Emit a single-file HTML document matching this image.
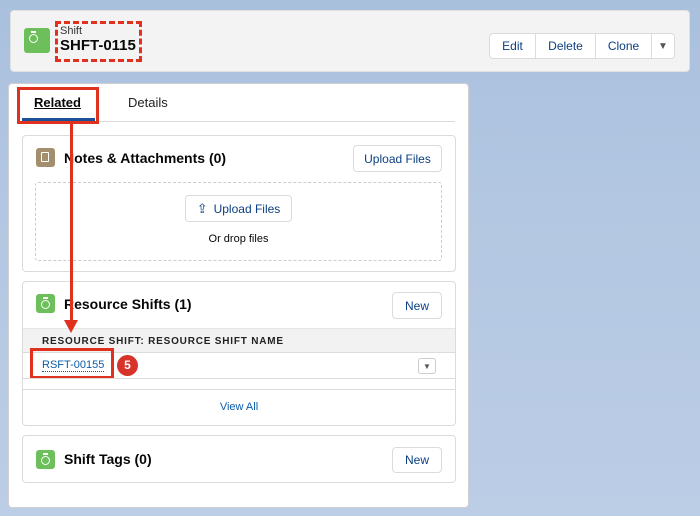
<!DOCTYPE html>
<html><head><style>
*{box-sizing:border-box;margin:0;padding:0}
body{width:700px;height:516px;overflow:hidden;background:linear-gradient(180deg,#a9c0dd 0%,#b3c7e2 40%,#bccde6 100%);font-family:"Liberation Sans",sans-serif;position:relative;color:#080707}
.a{position:absolute}
.card{position:absolute;background:#fff;border:1px solid #dddbda;border-radius:4px}
.btn{position:absolute;background:#fff;border:1px solid #dddbda;border-radius:4px;color:#0b3f82;font-size:12px;display:flex;align-items:center;justify-content:center}
.ic{position:absolute;width:19px;height:19px;background:#6cbf5b;border-radius:3px}
.ic::after{content:"";position:absolute;left:5px;top:6px;width:7px;height:7px;border:1.5px solid #fff;border-radius:50%}
.ic::before{content:"";position:absolute;left:7px;top:3px;width:5px;height:2px;background:#fff}
.t{position:absolute;font-size:14px;font-weight:bold;color:#080707}
</style></head><body>
<div class="card" style="left:10px;top:10px;width:680px;height:62px;background:#f3f3f3;border-color:#e0e0e0"></div>
<div class="ic" style="left:24px;top:28px;width:26px;height:25px"></div>
<div class="a" style="left:60px;top:25px;font-size:11px;color:#333">Shift</div>
<div class="a" style="left:60px;top:37px;font-size:15px;font-weight:bold">SHFT-0115</div>
<div class="a" style="left:55px;top:21px;width:87px;height:41px;border:3px dashed #e0301e"></div>
<div class="a" style="left:489px;top:33px;width:186px;height:26px;background:#fff;border:1px solid #dddbda;border-radius:4px;display:flex;font-size:12px;color:#0b3f82">
<div style="width:46px;border-right:1px solid #dddbda;display:flex;align-items:center;justify-content:center">Edit</div>
<div style="width:60px;border-right:1px solid #dddbda;display:flex;align-items:center;justify-content:center">Delete</div>
<div style="width:56px;border-right:1px solid #dddbda;display:flex;align-items:center;justify-content:center">Clone</div>
<div style="flex:1;display:flex;align-items:center;justify-content:center;color:#555;font-size:10px">▼</div>
</div>
<div class="card" style="left:8px;top:83px;width:461px;height:425px;border-color:#d0d0d0"></div>
<div class="a" style="left:34px;top:95px;font-size:13px;font-weight:bold;text-decoration:underline">Related</div>
<div class="a" style="left:128px;top:95px;font-size:13px;color:#222">Details</div>
<div class="a" style="left:22px;top:121px;width:433px;height:1px;background:#dddbda"></div>
<div class="a" style="left:22px;top:118px;width:73px;height:3px;background:#1b5297"></div>
<div class="a" style="left:17px;top:87px;width:82px;height:37px;border:3px solid #e0301e"></div>

<div class="card" style="left:22px;top:135px;width:434px;height:137px"></div>
<div class="a" style="left:36px;top:148px;width:19px;height:19px;background:#a38f6d;border-radius:3px"><div style="position:absolute;left:5px;top:4px;width:8px;height:10px;border:1.5px solid #fff;border-radius:1px"></div></div>
<div class="t" style="left:64px;top:150px">Notes &amp; Attachments (0)</div>
<div class="btn" style="left:353px;top:145px;width:89px;height:27px">Upload Files</div>
<div class="a" style="left:35px;top:182px;width:407px;height:79px;border:1px dashed #ccc;border-radius:3px"></div>
<div class="btn" style="left:185px;top:195px;width:107px;height:27px"><span style="font-size:13px;margin-right:6px">⇪</span>Upload Files</div>
<div class="a" style="left:0;width:477px;top:233px;text-align:center;font-size:11px">Or drop files</div>

<div class="card" style="left:22px;top:281px;width:434px;height:145px"></div>
<div class="ic" style="left:36px;top:294px"></div>
<div class="t" style="left:64px;top:296px">Resource Shifts (1)</div>
<div class="btn" style="left:392px;top:292px;width:50px;height:27px">New</div>
<div class="a" style="left:23px;top:328px;width:432px;height:25px;background:#f3f2f2;border-top:1px solid #e5e5e5;border-bottom:1px solid #dddbda"></div>
<div class="a" style="left:42px;top:336px;font-size:10px;font-weight:bold;letter-spacing:.8px;color:#222">RESOURCE SHIFT: RESOURCE SHIFT NAME</div>
<div class="a" style="left:42px;top:359px;font-size:11px;color:#0b5cab;border-bottom:1px dotted #0b5cab">RSFT-00155</div>
<div class="a" style="left:30px;top:348px;width:84px;height:31px;border:3px solid #e0301e"></div>
<div class="a" style="left:117px;top:355px;width:21px;height:21px;border-radius:50%;background:#d8332a;color:#fff;font-weight:bold;font-size:12px;text-align:center;line-height:21px">5</div>
<div class="a" style="left:418px;top:358px;width:18px;height:16px;border:1px solid #ccc;border-radius:3px;font-size:8px;color:#555;text-align:center;line-height:15px">▼</div>
<div class="a" style="left:23px;top:378px;width:432px;height:1px;background:#dddbda"></div>
<div class="a" style="left:23px;top:389px;width:432px;height:1px;background:#dddbda"></div>
<div class="a" style="left:22px;width:434px;top:401px;text-align:center;font-size:11px;color:#0b5cab">View All</div>

<div class="card" style="left:22px;top:435px;width:434px;height:48px"></div>
<div class="ic" style="left:36px;top:450px"></div>
<div class="t" style="left:64px;top:451px">Shift Tags (0)</div>
<div class="btn" style="left:392px;top:447px;width:50px;height:26px">New</div>

<div class="a" style="left:70px;top:124px;width:3px;height:198px;background:#e0301e"></div>
<div class="a" style="left:64px;top:320px;width:0;height:0;border-left:7.5px solid transparent;border-right:7.5px solid transparent;border-top:13px solid #e0301e"></div>
</body></html>
